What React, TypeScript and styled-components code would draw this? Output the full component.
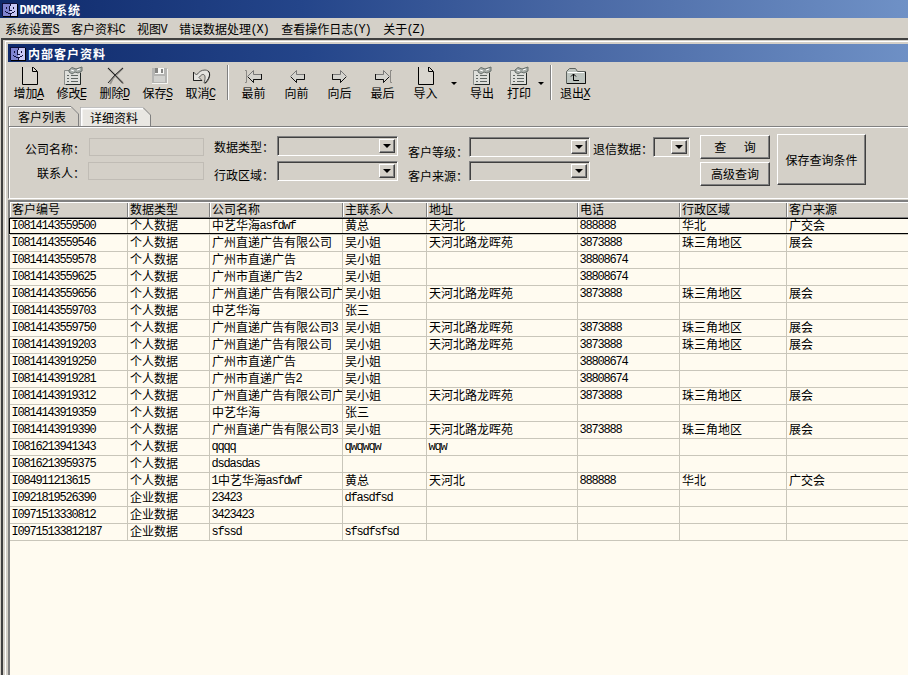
import React from "react";
import styled, { createGlobalStyle, css } from "styled-components";

const Global = createGlobalStyle`
  * { box-sizing: border-box; }
  html, body { margin: 0; background: #d4d0c8; overflow: hidden; }
  body { font: 12px/14px "Noto Sans CJK SC", sans-serif; color: #000; }
`;

const Latin = styled.span`
  font-family: "Liberation Mono", monospace;
  font-size: 12px;
  line-height: 0;
  letter-spacing: -1.2px;
  vertical-align: 1px;
  margin: 0 0.6px 0 -0.6px;
`;

/* Half-width characters take exactly half of a Chinese character cell. */
const T = ({ children }: { children: string }) => (
  <>
    {children.split(/([\x20-\x7e]+)/).map((part, i) =>
      i % 2 ? <Latin key={i}>{part}</Latin> : part
    )}
  </>
);

const Window = styled.div`
  width: 908px;
  height: 675px;
  overflow: hidden;
  display: flex;
  flex-direction: column;
  background: #d4d0c8;
  white-space: pre;
`;
const TitleBar = styled.div`
  height: 18px;
  flex: none;
  display: flex;
  align-items: center;
  gap: 2px;
  padding: 1px 0 0 2px;
  color: #fff;
  font-weight: 700;
  letter-spacing: 1px;
  background: linear-gradient(90deg, #0f2a6b 0, #24458a 300px, #4a69a5 580px, #6f91c6 908px);
  ${Latin} { letter-spacing: -0.2px; }
`;
const MenuBar = styled.div`
  height: 20px;
  flex: none;
  display: flex;
  align-items: center;
  gap: 12px;
  padding: 1px 0 0 5px;
`;
const Frame = styled.div`
  flex: 1;
  min-height: 0;
  display: flex;
  margin-left: 1px;
  border: solid #404040;
  border-width: 2px 0 0 2px;
`;
const Child = styled.div`
  flex: 1;
  min-width: 0;
  margin: 1px 0 0 2px;
  padding: 2px 0 0 2px;
  border: solid #fff;
  border-width: 1px 0 0 1px;
  display: flex;
  flex-direction: column;
`;
const ToolBar = styled.div`
  height: 44px;
  flex: none;
  display: flex;
  align-items: flex-start;
  padding: 3px 0 0 0;
`;
const Tool = styled.div<{ $w: number }>`
  width: ${(p) => p.$w}px;
  flex: none;
  display: flex;
  flex-direction: column;
  align-items: center;
  svg { display: block; height: 20px; width: 22px; margin-top: 1px; }
`;
const Caption = styled.div<{ $hot: boolean }>`
  height: 16px;
  line-height: 16px;
  margin-top: -1px;
  margin-left: ${(p) => (p.$hot ? -2 : 0)}px;
`;
const Split = styled.div<{ $w: number }>`
  width: ${(p) => p.$w}px;
  padding-top: 17px;
  display: flex;
  justify-content: center;
`;
const Caret = styled.i<{ $s?: number }>`
  display: block;
  height: 0;
  border: solid transparent;
  border-width: ${(p) => p.$s ?? 4}px ${(p) => p.$s ?? 4}px 0;
  border-top-color: #000;
`;
const Rule = styled.div<{ $l: number; $r: number }>`
  width: 2px;
  height: 35px;
  margin: 0 ${(p) => p.$r}px 0 ${(p) => p.$l}px;
  background: linear-gradient(90deg, #808080 50%, #fff 50%);
`;
const Tabs = styled.div`
  height: 20px;
  flex: none;
  display: flex;
  align-items: flex-end;
  gap: 1px;
  svg { display: block; }
`;
const Tab = styled.div<{ $on?: boolean }>`
  width: ${(p) => (p.$on ? 71 : 72)}px;
  height: ${(p) => (p.$on ? 20 : 19)}px;
  display: grid;
  > * { grid-area: 1 / 1; }
`;
const TabText = styled.span`
  padding: 4px 0 0 10px;
`;
const Filters = styled.div`
  height: 73px;
  flex: none;
  display: flex;
  border: 1px solid #808080;
  border-bottom-color: #fff;
  border-right: 0;
  box-shadow: inset 1px 1px #fff;
`;
const Column = styled.div<{ $w: number; $top: number; $gap: number; $end?: number }>`
  width: ${(p) => p.$w}px;
  flex: none;
  padding: ${(p) => p.$top}px ${(p) => p.$end ?? 0}px 0 0;
  display: flex;
  flex-direction: column;
  gap: ${(p) => p.$gap}px;
  align-items: ${(p) => (p.$end ? "flex-end" : "flex-start")};
`;
const Label = styled.div`
  height: 14px;
`;
const Field = styled.div<{ $w: number }>`
  width: ${(p) => p.$w}px;
  height: 18px;
  border: 1px solid #c0bcb5;
`;
const Combo = styled.div<{ $w: number }>`
  width: ${(p) => p.$w}px;
  height: 20px;
  display: flex;
  justify-content: flex-end;
  border: 1px solid;
  border-color: #808080 #fff #fff #808080;
  box-shadow: inset 1px 1px #404040, inset -1px -1px #d4d0c8;
  padding: 2px;
`;
const raised = css`
  border: 1px solid;
  border-color: #fff #404040 #404040 #fff;
  box-shadow: inset -1px -1px #808080;
`;
const Drop = styled.div`
  ${raised}
  width: 16px;
  height: 14px;
  display: flex;
  align-items: center;
  justify-content: center;
`;
const Button = styled.div<{ $w: number; $h: number }>`
  ${raised}
  width: ${(p) => p.$w}px;
  height: ${(p) => p.$h}px;
  display: flex;
  align-items: center;
  justify-content: center;
`;
const COLS = "118px 82px 133px 84px 151px 102px 107px 1fr";
const Grid = styled.div`
  flex: 1;
  min-height: 0;
  margin-top: 1px;
  border: solid #808080;
  border-width: 2px 0 0 2px;
  background: #fffbf0;
`;
const HeadRow = styled.div`
  display: grid;
  grid-template-columns: ${COLS};
  height: 16px;
  background: #d4d0c8;
  border-top: 1px solid #fff;
  border-bottom: 1px solid #808080;
`;
const HeadCell = styled.div`
  padding-left: 2px;
  height: 14px;
  line-height: 12px;
  overflow-x: clip;
  border-right: 1px solid #808080;
  box-shadow: inset 1px 0 #fff;
  &:last-child { border-right: 0; }
`;
const Cell = styled.div`
  padding-left: 2px;
  height: 100%;
  line-height: 13px;
  overflow-x: clip;
  border-right: 1px solid #c9c6ba;
  &:last-child { border-right: 0; }
`;
const Row = styled.div<{ $sel?: boolean }>`
  display: grid;
  grid-template-columns: ${COLS};
  height: 17px;
  border-bottom: 1px solid #c9c6ba;
  ${(p) => p.$sel && css`
    height: 16px;
    margin: 0 0 1px -1px;
    border: 1px solid #000;
    border-right: 0;
    box-shadow: 0 1px #c9c6ba;
    ${Cell} { line-height: 11px; }
  `}
`;

const Logo = () => (
  <svg width="16" height="14" viewBox="0 0 16 14" shapeRendering="crispEdges">
    <rect x="1" y="1" width="14" height="12" fill="#c8c8f4" />
    <rect x="1" y="1" width="7" height="12" fill="#7f83d0" />
    <path d="M.5 13V.5H15M8.5 1V3M7.5 3V7H9.5M8.5 10V13M4.500 4V6M11.500 4V6M3 8.500H4M4 9.500H6M6 10.500H10M10 9.500H12M12 8.500H13" fill="none" stroke="#10103c" />
    <path d="M15.500 1V13.500H1" fill="none" stroke="#000" />
  </svg>
);

const Svg = ({ children }: { children: React.ReactNode }) => (
  <svg viewBox="0 0 22 20" fill="none">{children}</svg>
);
const Page = () => (
  <Svg>
    <path d="M3.500 1.500H13.500L18.500 6.500V18.500H3.500Z" fill="#d9d6cf" stroke="none" />
    <path d="M3.500 1V18.500H18.500V5.500L14.500 1.500H13M13.500 1V5.500H18" stroke="#000" />
  </Svg>
);
const Form = () => (
  <Svg>
    <path d="M2.500 4.500H18.500V18.500H2.500Z" fill="#dedfdb" stroke="#8b8d8a" />
    <path d="M18.500 7V18.500H4" stroke="#202725" />
    <path d="M5 9.500H7M9 9.500H16M5 12.500H7M9 12.500H16M5 15.500H7M9 15.500H16" stroke="#5f6663" />
    <path d="M7 4L10 1.500L14 3L20 1V5L16 7L13 6L10 8L7 6Z" fill="#a6aca8" stroke="#68706c" />
    <path d="M9 4L12 5M15 4L18 3" stroke="#fff" />
  </Svg>
);
const Cross = () => (
  <Svg>
    <path d="M3 2L18 17M18 2L8 12L5 18" stroke="#9a9791" strokeWidth="2" />
    <path d="M3 2L9 8L18 17.500M18 2L10 9L3 17" stroke="#252525" />
  </Svg>
);
const Disk = () => (
  <Svg>
    <path d="M4 2H19V17H4Z" fill="#b5b5b3" />
    <path d="M4 17.500H19.500V3" stroke="#f6f6f3" />
    <path d="M7 2H16V8H7Z" fill="#f8f8f6" />
    <path d="M7 2H10V7H7ZM13 3H15V7H13Z" fill="#858583" />
    <path d="M6 10H17V16H6Z" fill="#d1d1ce" />
  </Svg>
);
const Undo = () => (
  <Svg>
    <path d="M2.500 6V14.500H11L8 11.500C12 6 16 8 13 17H15C21 10 19 4 14 4C10 4 8 6 5.500 9Z" fill="#e4e3df" stroke="#5a5a58" />
    <path d="M2.500 6V14.500H11M14 17C20 11 19 6 17 5" stroke="#202020" />
  </Svg>
);
const Arrow = ({ right, stop }: { right?: boolean; stop?: boolean }) => (
  <Svg>
    <g transform={right ? "matrix(-1 0 0 1 22 0)" : undefined}>
      {stop && <path d="M2 4.500H3.500V16.500H2" stroke="#8b8985" />}
      <path d="M4.500 10.500L10.500 4.500V8.500H18.500V13.500H10.500V16.500Z" fill="#d4d3ce" stroke="#777" />
      <path d="M5 11L10.500 16.500V13.500H18.500V8" stroke="#111" />
    </g>
  </Svg>
);
const Exit = () => (
  <Svg>
    <path d="M1.500 17.500V5.500L4.500 2.500H10.500L12.500 5.500H20.500V17.500Z" fill="#bec5c0" stroke="#5c625e" />
    <path d="M2.500 6.500H19" stroke="#fff" />
    <path d="M20.500 6V17.500H2" stroke="#111" />
    <path d="M8.500 8V14.500H14M6 10.500L8.500 8L11 10.500" stroke="#000" />
  </Svg>
);

const ToolItem = ({ w, icon, text, hot }: { w: number; icon: React.ReactNode; text: string; hot?: string }) => (
  <Tool $w={w}>
    {icon}
    <Caption $hot={!!hot}>{text}{hot && <u><T>{hot}</T></u>}</Caption>
  </Tool>
);
const Select = ({ w }: { w: number }) => (
  <Combo $w={w}><Drop><Caret /></Drop></Combo>
);

const A = "广州直递广告有限公司";
const N = "天河北路龙晖苑";
const P = "个人数据";
const E = "企业数据";
const Z = "珠三角地区";
const ROWS: string[][] = [
  ["I0814143559500", P, "中艺华海asfdwf", "黄总", "天河北", "888888", "华北", "广交会"],
  ["I0814143559546", P, A, "吴小姐", N, "3873888", Z, "展会"],
  ["I0814143559578", P, "广州市直递广告", "吴小姐", "", "38808674", "", ""],
  ["I0814143559625", P, "广州市直递广告2", "吴小姐", "", "38808674", "", ""],
  ["I0814143559656", P, A + "广", "吴小姐", N, "3873888", Z, "展会"],
  ["I0814143559703", P, "中艺华海", "张三", "", "", "", ""],
  ["I0814143559750", P, A + "3", "吴小姐", N, "3873888", Z, "展会"],
  ["I0814143919203", P, A, "吴小姐", N, "3873888", Z, "展会"],
  ["I0814143919250", P, "广州市直递广告", "吴小姐", "", "38808674", "", ""],
  ["I0814143919281", P, "广州市直递广告2", "吴小姐", "", "38808674", "", ""],
  ["I0814143919312", P, A + "广", "吴小姐", N, "3873888", Z, "展会"],
  ["I0814143919359", P, "中艺华海", "张三", "", "", "", ""],
  ["I0814143919390", P, A + "3", "吴小姐", N, "3873888", Z, "展会"],
  ["I0816213941343", P, "qqqq", "qwqwqw", "wqw", "", "", ""],
  ["I0816213959375", P, "dsdasdas", "", "", "", "", ""],
  ["I084911213615", P, "1中艺华海asfdwf", "黄总", "天河北", "888888", "华北", "广交会"],
  ["I0921819526390", E, "23423", "dfasdfsd", "", "", "", ""],
  ["I0971513330812", E, "3423423", "", "", "", "", ""],
  ["I09715133812187", E, "sfssd", "sfsdfsfsd", "", "", "", ""],
];
const HEAD = ["客户编号", "数据类型", "公司名称", "主联系人", "地址", "电话", "行政区域", "客户来源"];
const MENU = ["系统设置S", "客户资料C", "视图V", "错误数据处理(X)", "查看操作日志(Y)", "关于(Z)"];

export default function App() {
  return (
    <Window>
      <Global />
      <TitleBar><Logo /><span><T>DMCRM系统</T></span></TitleBar>
      <MenuBar>{MENU.map((m) => <span key={m}><T>{m}</T></span>)}</MenuBar>
      <Frame>
        <Child>
          <TitleBar><Logo /><span>内部客户资料</span></TitleBar>
          <ToolBar>
            <ToolItem w={43} icon={<Page />} text="增加" hot="A" />
            <ToolItem w={43} icon={<Form />} text="修改" hot="E" />
            <ToolItem w={43} icon={<Cross />} text="删除" hot="D" />
            <ToolItem w={43} icon={<Disk />} text="保存" hot="S" />
            <ToolItem w={43} icon={<Undo />} text="取消" hot="C" />
            <Rule $l={4} $r={3} />
            <ToolItem w={43} icon={<Arrow stop />} text="最前" />
            <ToolItem w={43} icon={<Arrow />} text="向前" />
            <ToolItem w={43} icon={<Arrow right />} text="向后" />
            <ToolItem w={43} icon={<Arrow right stop />} text="最后" />
            <ToolItem w={43} icon={<Page />} text="导入" />
            <Split $w={14}><Caret $s={3} /></Split>
            <ToolItem w={42} icon={<Form />} text="导出" />
            <ToolItem w={32} icon={<Form />} text="打印" />
            <Split $w={12}><Caret $s={3} /></Split>
            <Rule $l={3} $r={3} />
            <ToolItem w={42} icon={<Exit />} text="退出" hot="X" />
          </ToolBar>
          <Tabs>
            <Tab $on>
              <svg width="71" height="20" fill="none">
                <path d="M.5 20V.5H63L70.500 8V20" stroke="#808080" />
                <path d="M1.500 20V1.500H63" stroke="#fff" />
              </svg>
              <TabText>客户列表</TabText>
            </Tab>
            <Tab>
              <svg width="72" height="19" fill="none">
                <path d="M.5 19V.5H63L70.500 8V19" fill="#e9e7e2" stroke="#808080" />
                <path d="M1.500 19V1.500H63" stroke="#fff" strokeWidth="2" />
              </svg>
              <TabText>详细资料</TabText>
            </Tab>
          </Tabs>
          <Filters>
            <Column $w={80} $top={15} $gap={10} $end={4}><Label>公司名称：</Label><Label>联系人：</Label></Column>
            <Column $w={125} $top={11} $gap={6} $end={10}><Field $w={115} /><Field $w={116} /></Column>
            <Column $w={63} $top={13} $gap={14}><Label>数据类型：</Label><Label>行政区域：</Label></Column>
            <Column $w={131} $top={9} $gap={5}><Select w={121} /><Select w={121} /></Column>
            <Column $w={61} $top={18} $gap={10}><Label>客户等级：</Label><Label>客户来源：</Label></Column>
            <Column $w={124} $top={10} $gap={4}><Select w={121} /><Select w={121} /></Column>
            <Column $w={60} $top={15} $gap={0}><Label>退信数据：</Label></Column>
            <Column $w={47} $top={10} $gap={0}><Select w={37} /></Column>
            <Column $w={77} $top={8} $gap={3}>
              <Button $w={70} $h={24}>{"查\u3000  询"}</Button>
              <Button $w={70} $h={24}>高级查询</Button>
            </Column>
            <Column $w={90} $top={7} $gap={0}><Button $w={89} $h={51}>保存查询条件</Button></Column>
          </Filters>
          <Grid>
            <HeadRow>{HEAD.map((h) => <HeadCell key={h}>{h}</HeadCell>)}</HeadRow>
            {ROWS.map((r, i) => (
              <Row key={r[0]} $sel={i === 0}>
                {r.map((c, j) => <Cell key={j}><T>{c}</T></Cell>)}
              </Row>
            ))}
          </Grid>
        </Child>
      </Frame>
    </Window>
  );
}
